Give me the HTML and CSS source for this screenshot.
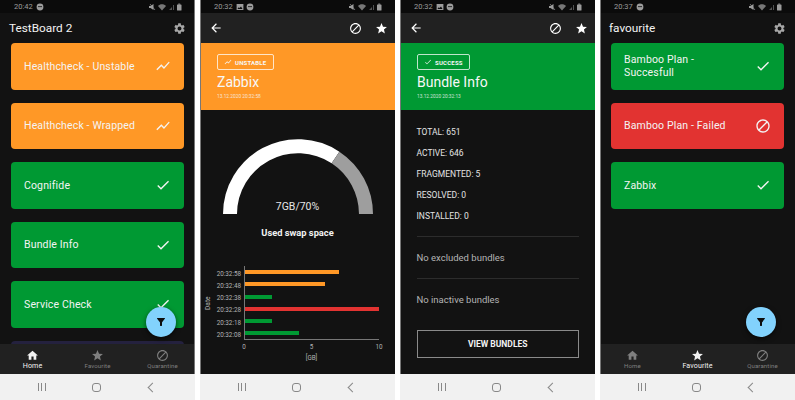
FILE: index.html
```html
<!DOCTYPE html>
<html lang="en">
<head>
    <meta charset="UTF-8">
    <title>Board screens</title>
    <link rel="stylesheet" href="styles.css">
</head>
<body>

    <!-- Shared icons -->
    <svg class="sprite" xmlns="http://www.w3.org/2000/svg">
        <symbol id="i-check" viewBox="0 0 24 24"><path d="M9 16.17L4.83 12l-1.42 1.41L9 19 21 7l-1.41-1.41z"/></symbol>
        <symbol id="i-chart" viewBox="0 0 24 24"><path d="M3.5 18.49l6-6.01 4 4L22 6.92l-1.41-1.41-7.09 7.97-4-4L2 16.99z"/></symbol>
        <symbol id="i-gear" viewBox="0 0 24 24"><path d="M19.14 12.94c.04-.3.06-.61.06-.94 0-.32-.02-.64-.07-.94l2.03-1.58c.18-.14.23-.41.12-.61l-1.92-3.32c-.12-.22-.37-.29-.59-.22l-2.39.96c-.5-.38-1.03-.7-1.62-.94l-.36-2.54c-.04-.24-.24-.41-.48-.41h-3.84c-.24 0-.43.17-.47.41l-.36 2.54c-.59.24-1.13.57-1.62.94l-2.39-.96c-.22-.08-.47 0-.59.22L2.74 8.87c-.12.21-.08.47.12.61l2.03 1.58c-.05.3-.09.63-.09.94s.02.64.07.94l-2.03 1.58c-.18.14-.23.41-.12.61l1.92 3.32c.12.22.37.29.59.22l2.39-.96c.5.38 1.03.7 1.62.94l.36 2.54c.05.24.24.41.48.41h3.84c.24 0 .44-.17.47-.41l.36-2.54c.59-.24 1.13-.56 1.62-.94l2.39.96c.22.08.47 0 .59-.22l1.92-3.32c.12-.22.07-.47-.12-.61l-2.01-1.58zM12 15.6c-1.98 0-3.6-1.62-3.6-3.6s1.62-3.6 3.6-3.6 3.6 1.62 3.6 3.6-1.62 3.6-3.6 3.6z"/></symbol>
        <symbol id="i-home" viewBox="0 0 24 24"><path d="M10 20v-6h4v6h5v-8h3L12 3 2 12h3v8z"/></symbol>
        <symbol id="i-star" viewBox="0 0 24 24"><path d="M12 17.27L18.18 21l-1.64-7.03L22 9.24l-7.19-.61L12 2 9.19 8.63 2 9.24l5.46 4.73L5.82 21z"/></symbol>
        <symbol id="i-block" viewBox="0 0 24 24"><path d="M12 2C6.48 2 2 6.48 2 12s4.48 10 10 10 10-4.48 10-10S17.52 2 12 2zM4 12c0-4.42 3.58-8 8-8 1.85 0 3.55.63 4.9 1.69L5.69 16.9C4.63 15.55 4 13.85 4 12zm8 8c-1.85 0-3.55-.63-4.9-1.69L18.31 7.1C19.37 8.45 20 10.15 20 12c0 4.42-3.58 8-8 8z"/></symbol>
        <symbol id="i-back" viewBox="0 0 24 24"><path d="M20 11H7.83l5.59-5.59L12 4l-8 8 8 8 1.41-1.41L7.83 13H20v-2z"/></symbol>
        <symbol id="i-filter" viewBox="0 0 24 24"><path d="M4.25 5.61C6.27 8.2 10 13 10 13v6c0 .55.45 1 1 1h2c.55 0 1-.45 1-1v-6s3.72-4.8 5.74-7.39c.51-.66.04-1.61-.79-1.61H5.04c-.83 0-1.3.95-.79 1.61z"/></symbol>
        <symbol id="i-status" viewBox="0 0 34 8">
            <path d="M0 3h1.500L4.500 1v6L1.500 5H0z"/><path d="M1 1l5 6" stroke="currentColor" stroke-width=".7"/>
            <path d="M9 3c2-2.200 6-2.200 8 0l-4 4.500z" opacity=".75"/>
            <path d="M20 7l3-3v3zM24 7V2h1v5z" opacity=".5"/>
            <rect x="28" y="1.500" width="4.500" height="6" rx=".6"/><rect x="29.200" y=".6" width="2" height="1"/>
        </symbol>
        <symbol id="i-circle" viewBox="0 0 8 8"><circle cx="4" cy="4" r="3.400"/><rect x="2" y="3.300" width="4" height=".8" fill="#0c0c0c"/></symbol>
        <symbol id="i-picture" viewBox="0 0 8 8"><path d="M.6 1h6.800v6H.6zM1.500 6h5L5 3.500 3.500 5l-.8-.8z" fill-rule="evenodd"/></symbol>
    </svg>

    <div class="screens">

        <!-- Board -->
        <section class="phone">
            <div class="status"><span>20:42</span><svg class="st-small"><use href="#i-circle"/></svg><svg class="st-right"><use href="#i-status"/></svg></div>
            <header class="board-title"><h2>TestBoard 2</h2><svg class="ico-gear"><use href="#i-gear"/></svg></header>
            <div class="cards">
                <div class="card orange"><span>Healthcheck - Unstable</span><svg class="ico"><use href="#i-chart"/></svg></div>
                <div class="card orange"><span>Healthcheck - Wrapped</span><svg class="ico"><use href="#i-chart"/></svg></div>
                <div class="card green"><span>Cognifide</span><svg class="ico"><use href="#i-check"/></svg></div>
                <div class="card green"><span>Bundle Info</span><svg class="ico"><use href="#i-check"/></svg></div>
                <div class="card green"><span>Service Check</span><svg class="ico"><use href="#i-check"/></svg></div>
                <div class="card purple"></div>
            </div>
            <button class="fab"><svg><use href="#i-filter"/></svg></button>
            <nav class="tabs">
                <div class="tab active"><svg><use href="#i-home"/></svg><span>Home</span></div>
                <div class="tab"><svg><use href="#i-star"/></svg><span>Favourite</span></div>
                <div class="tab"><svg><use href="#i-block"/></svg><span>Quarantine</span></div>
            </nav>
            <div class="sysnav"><i class="sys-recent"></i><i class="sys-home"></i><i class="sys-back"></i></div>
        </section>

        <!-- Zabbix details -->
        <section class="phone">
            <div class="status"><span>20:32</span><svg class="st-small"><use href="#i-picture"/></svg><svg class="st-small"><use href="#i-circle"/></svg><svg class="st-right"><use href="#i-status"/></svg></div>
            <header class="appbar"><svg class="bar-back"><use href="#i-back"/></svg><svg class="bar-ico"><use href="#i-block"/></svg><svg class="bar-ico"><use href="#i-star"/></svg></header>
            <div class="banner orange">
                <div class="badge wide"><svg><use href="#i-chart"/></svg>UNSTABLE</div>
                <h1>Zabbix</h1>
                <p class="stamp">13.12.2020 20:32:58</p>
            </div>
            <div class="gauge-body">
                <div class="gauge">
                    <svg viewBox="0 0 150 75" width="150" height="75">
                        <path d="M7 75A68 68 0 0 1 112.500 18.500" fill="none" stroke="#fff" stroke-width="14"/>
                        <path d="M112.500 18.500A68 68 0 0 1 143 75" fill="none" stroke="#9e9e9e" stroke-width="14"/>
                    </svg>
                    <div class="gauge-value">7GB/70%</div>
                </div>
                <div class="gauge-title">Used swap space</div>
                <div class="chart">
                    <div class="axis-y">Date</div>
                    <div class="chart-main">
                        <div class="rows">
                            <div class="row"><span>20:32:58</span><div class="track"><div class="bar orange" style="width:70%"></div></div></div>
                            <div class="row"><span>20:32:48</span><div class="track"><div class="bar orange" style="width:60%"></div></div></div>
                            <div class="row"><span>20:32:38</span><div class="track"><div class="bar green" style="width:20%"></div></div></div>
                            <div class="row"><span>20:32:28</span><div class="track"><div class="bar red" style="width:100%"></div></div></div>
                            <div class="row"><span>20:32:18</span><div class="track"><div class="bar green" style="width:20%"></div></div></div>
                            <div class="row"><span>20:32:08</span><div class="track"><div class="bar green" style="width:40%"></div></div></div>
                        </div>
                        <div class="ticks"><span>0</span><span>5</span><span>10</span></div>
                        <div class="axis-x">[GB]</div>
                    </div>
                </div>
            </div>
            <div class="sysnav"><i class="sys-recent"></i><i class="sys-home"></i><i class="sys-back"></i></div>
        </section>

        <!-- Bundle details -->
        <section class="phone">
            <div class="status"><span>20:32</span><svg class="st-small"><use href="#i-picture"/></svg><svg class="st-small"><use href="#i-circle"/></svg><svg class="st-right"><use href="#i-status"/></svg></div>
            <header class="appbar"><svg class="bar-back"><use href="#i-back"/></svg><svg class="bar-ico"><use href="#i-block"/></svg><svg class="bar-ico"><use href="#i-star"/></svg></header>
            <div class="banner green">
                <div class="badge"><svg><use href="#i-check"/></svg>SUCCESS</div>
                <h1>Bundle Info</h1>
                <p class="stamp">13.12.2020 20:32:13</p>
            </div>
            <div class="info">
                <ul class="stats">
                    <li>TOTAL: 651</li>
                    <li>ACTIVE: 646</li>
                    <li>FRAGMENTED: 5</li>
                    <li>RESOLVED: 0</li>
                    <li>INSTALLED: 0</li>
                </ul>
                <div class="note">No excluded bundles</div>
                <div class="note">No inactive bundles</div>
                <button class="outline">VIEW BUNDLES</button>
            </div>
            <div class="sysnav"><i class="sys-recent"></i><i class="sys-home"></i><i class="sys-back"></i></div>
        </section>

        <!-- Favourites -->
        <section class="phone">
            <div class="status"><span>20:37</span><svg class="st-small"><use href="#i-circle"/></svg><svg class="st-right"><use href="#i-status"/></svg></div>
            <header class="board-title"><h2>favourite</h2><svg class="ico-gear"><use href="#i-gear"/></svg></header>
            <div class="cards">
                <div class="card green"><span>Bamboo Plan -<br>Succesfull</span><svg class="ico"><use href="#i-check"/></svg></div>
                <div class="card red"><span>Bamboo Plan - Failed</span><svg class="ico"><use href="#i-block"/></svg></div>
                <div class="card green"><span>Zabbix</span><svg class="ico"><use href="#i-check"/></svg></div>
            </div>
            <button class="fab"><svg><use href="#i-filter"/></svg></button>
            <nav class="tabs">
                <div class="tab"><svg><use href="#i-home"/></svg><span>Home</span></div>
                <div class="tab active"><svg><use href="#i-star"/></svg><span>Favourite</span></div>
                <div class="tab"><svg><use href="#i-block"/></svg><span>Quarantine</span></div>
            </nav>
            <div class="sysnav"><i class="sys-recent"></i><i class="sys-home"></i><i class="sys-back"></i></div>
        </section>

    </div>
</body>
</html>
```

FILE: styles.css
```css
* {
    margin: 0;
    padding: 0;
    box-sizing: border-box;
    font-family: 'Roboto', sans-serif;
}

body {
    background-color: white;
    width: 795px;
    height: 400px;
    overflow: hidden;
}

.sprite {
    display: none;
}

svg {
    fill: currentColor;
}

.screens {
    display: flex;
    gap: 5px;
}

.phone {
    position: relative;
    width: 195px;
    height: 400px;
    flex: none;
    display: flex;
    flex-direction: column;
    overflow: hidden;
    background: #121212;
    color: white;
}

/* Thin grey edge of each screenshot */
.phone::after {
    content: "";
    position: absolute;
    left: 0;
    top: 0;
    bottom: 26px;
    width: 1px;
    background: #777;
}

.phone:first-child::after {
    left: auto;
    right: 0;
}

/* Status bar */
.status {
    height: 13px;
    flex: none;
    background: #0b0b0b;
    color: #9c9c9c;
    font-size: 7.5px;
    display: flex;
    align-items: center;
    gap: 2px;
    padding: 0 12px 0 14px;
}

.status span {
    margin-right: 1px;
}

.st-small {
    width: 8px;
    height: 8px;
}

.st-right {
    width: 34px;
    height: 8px;
    margin-left: auto;
}

/* Board header */
.board-title {
    height: 30px;
    flex: none;
    display: flex;
    align-items: center;
    justify-content: space-between;
    padding: 0 9px 0 9px;
}

.board-title h2 {
    font-size: 11.8px;
    font-weight: 400;
    color: #f2f2f2;
}

.ico-gear {
    width: 13px;
    height: 13px;
    color: #a8a8a8;
    margin-top: 1px;
}

/* Cards */
.cards {
    flex: 1;
    min-height: 0;
    overflow: hidden;
    display: flex;
    flex-direction: column;
    gap: 13px;
    padding: 0 11px;
}

.card {
    height: 46.5px;
    flex: none;
    border-radius: 4px;
    display: flex;
    align-items: center;
    justify-content: space-between;
    padding: 0 13px 0 13px;
    font-size: 10.5px;
    line-height: 13px;
    letter-spacing: 0.15px;
    color: #f4f4f4;
}

.ico {
    width: 16px;
    height: 16px;
    flex: none;
}

.orange { background: #ff9826; }
.green { background: #009933; }
.red { background: #e23331; }
.purple { background: #24213e; }

/* Floating filter button */
.fab {
    position: absolute;
    right: 19px;
    top: 307px;
    width: 30px;
    height: 30px;
    border: none;
    border-radius: 50%;
    background: #82d2fd;
    color: #0d0d0d;
    box-shadow: 0 2px 5px rgba(0, 0, 0, 0.6);
    display: flex;
    align-items: center;
    justify-content: center;
}

.fab svg {
    width: 12px;
    height: 12px;
}

/* Bottom tabs */
.tabs {
    height: 30px;
    flex: none;
    background: #212121;
    display: grid;
    grid-template-columns: repeat(3, 1fr);
}

.tab {
    display: flex;
    flex-direction: column;
    align-items: center;
    padding-top: 4.5px;
    color: #7f7f7f;
    font-size: 6.1px;
    line-height: 8px;
    letter-spacing: 0.1px;
}

.tab svg {
    width: 13px;
    height: 13px;
}

.tab.active {
    color: #f2f2f2;
    font-size: 7.1px;
}

/* System navigation */
.sysnav {
    height: 26px;
    flex: none;
    background: #f1f1f1;
    display: grid;
    grid-template-columns: repeat(3, 1fr);
    justify-items: center;
    align-items: center;
    padding: 0 15px 0 14px;
}

.sys-recent {
    width: 8px;
    height: 8px;
    border-left: 1px solid #888;
    border-right: 1px solid #888;
    background: linear-gradient(#888, #888) center / 1px 100% no-repeat;
}

.sys-home {
    width: 9px;
    height: 9px;
    border: 1px solid #888;
    border-radius: 3px;
}

.sys-back {
    width: 7px;
    height: 7px;
    border-left: 1px solid #888;
    border-bottom: 1px solid #888;
    transform: rotate(45deg);
}

/* Detail screens */
.appbar {
    height: 30px;
    flex: none;
    background: #212121;
    display: flex;
    align-items: center;
    gap: 13px;
    padding: 0 7px 0 9px;
}

.bar-back {
    width: 14px;
    height: 14px;
    margin-right: auto;
}

.bar-ico {
    width: 13px;
    height: 13px;
}

.banner {
    height: 67px;
    flex: none;
    padding: 11px 0 0 17px;
    color: #f7f7f7;
}

.banner h1 {
    font-size: 14px;
    font-weight: 400;
    line-height: 17px;
    margin-top: 4px;
}

.stamp {
    font-size: 4.8px;
    line-height: 6px;
    margin-top: 3px;
    opacity: 0.8;
}

.badge {
    width: 52.5px;
    height: 16px;
    border: 1px solid rgba(255, 255, 255, 0.75);
    border-radius: 2px;
    display: flex;
    align-items: center;
    gap: 3px;
    padding-left: 6px;
    font-size: 6px;
    font-weight: 700;
    letter-spacing: 0.2px;
}

.badge.wide {
    width: 56.5px;
}

.badge svg {
    width: 8px;
    height: 8px;
}

/* Gauge and chart */
.gauge-body {
    flex: 1;
    min-height: 0;
    display: flex;
    flex-direction: column;
    align-items: center;
    padding-top: 29px;
}

.gauge {
    position: relative;
    width: 150px;
    height: 75px;
}

.gauge svg {
    display: block;
}

.gauge-value {
    position: absolute;
    left: 0;
    right: 0;
    top: 61px;
    text-align: center;
    font-size: 10.5px;
    line-height: 14px;
    color: #e6e6e6;
}

.gauge-title {
    font-size: 9.3px;
    font-weight: 700;
    line-height: 12px;
    margin-top: 13px;
    color: #f2f2f2;
}

.chart {
    align-self: stretch;
    display: flex;
    margin-top: 27px;
    padding-left: 5px;
    color: #b4b4b4;
    font-size: 6.3px;
}

.axis-y {
    width: 6px;
    height: 74px;
    writing-mode: vertical-rl;
    transform: rotate(180deg);
    text-align: center;
    line-height: 6px;
    font-size: 6.6px;
}

.chart-main {
    width: 168px;
}

.row {
    display: flex;
    height: 12.25px;
    align-items: center;
}

.row span {
    width: 33px;
    padding-right: 3px;
    margin-top: 3px;
    text-align: right;
    flex: none;
    line-height: 12px;
}

.track {
    flex: 1;
    height: 100%;
    border-left: 1px solid #777;
    display: flex;
    align-items: center;
}

.row:last-child .track {
    border-bottom: 1px solid #777;
    height: 13px;
    align-self: flex-start;
}

.bar {
    height: 4px;
}

.ticks {
    display: flex;
    justify-content: space-between;
    margin: 4px 0 0 33px;
    line-height: 7px;
}

.ticks span {
    width: 0;
    display: flex;
    justify-content: center;
}

.axis-x {
    margin: 4px 0 0 33px;
    text-align: center;
    line-height: 7px;
}

/* Bundle details */
.info {
    flex: 1;
    min-height: 0;
    padding: 12px 16px 0 16.5px;
    color: #dcdcdc;
    font-size: 8.5px;
}

.stats {
    list-style: none;
    line-height: 21px;
    color: #e4e4e4;
    padding-bottom: 9px;
}

.note {
    border-top: 1px solid #2c2c2c;
    height: 42px;
    line-height: 41px;
    font-size: 9.5px;
    color: #b4b4b4;
}

.outline {
    display: block;
    width: 100%;
    height: 28px;
    margin-top: 10px;
    background: none;
    border: 1px solid #8a8a8a;
    color: #f2f2f2;
    font-size: 8.5px;
    font-weight: 700;
}
```
